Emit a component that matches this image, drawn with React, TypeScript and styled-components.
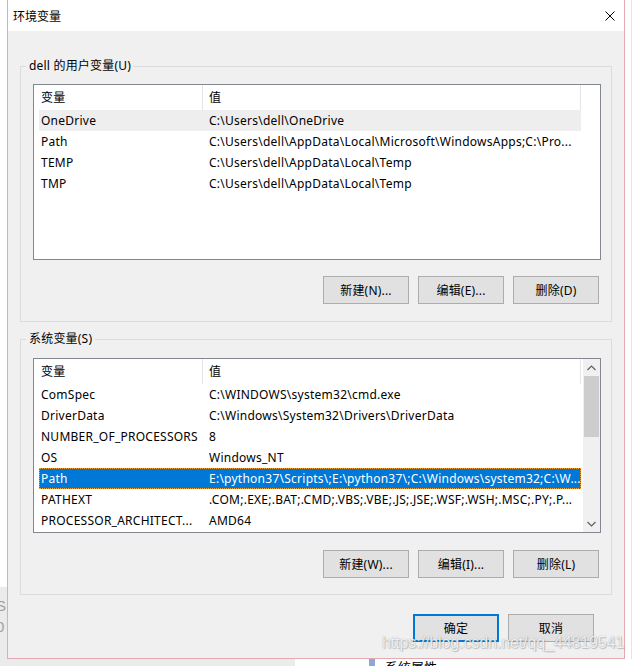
import React from "react";
import styled, { createGlobalStyle } from "styled-components";

const Global = createGlobalStyle`
  html, body { margin: 0; padding: 0; background: #ffffff; }
  body {
    font-family: "Noto Sans", "Noto Sans CJK SC", sans-serif;
    font-size: 12px;
    color: #000;
  }
  * { box-sizing: border-box; }
`;

const Page = styled.div`
  position: relative;
  width: 632px;
  height: 666px;
  overflow: hidden;
  display: grid;
  grid-template-columns: 7px 618px 7px;
  grid-template-rows: 659px 7px;
  background: #ffffff;
`;

const LeftStrip = styled.div`
  display: flex;
  flex-direction: column;
  justify-content: flex-end;
  overflow: hidden;
`;

const LeftGray = styled.div`
  height: 72px;
  background: #ebebeb;
  color: #a0a0a0;
  font-family: "Liberation Sans", sans-serif;
  font-size: 15px;
  line-height: 21px;
  padding-top: 8px;
  margin-left: -4px;
`;

const RightStrip = styled.div`
  border-right: 1px solid #e4e4e4;
`;

const BottomStrip = styled.div`
  grid-column: 1 / 4;
  display: flex;
  align-items: flex-start;
  overflow: hidden;
`;

const BottomGray = styled.div`
  width: 295px;
  height: 7px;
  background: #ebebeb;
`;

const BlueMark = styled.div`
  width: 6px;
  height: 7px;
  margin-left: 74px;
  background: #8ea6d8;
`;

const BottomText = styled.div`
  margin-left: 10px;
  margin-top: 1px;
  font-family: "Noto Sans CJK SC", sans-serif;
  font-size: 13px;
  line-height: 14px;
`;

const Window = styled.div`
  border: 1px solid #e3aab2;
  border-top: none;
  display: flex;
  flex-direction: column;
  background: #f0f0f0;
`;

const TitleBar = styled.div`
  height: 31px;
  background: #ffffff;
  display: flex;
  align-items: center;
  justify-content: space-between;
  padding-left: 5px;
  padding-right: 9px;
  font-family: "Noto Sans CJK SC", sans-serif;
  font-size: 12px;
`;

const CloseIcon = styled.svg`
  width: 10px;
  height: 10px;
  display: block;
`;

const Body = styled.div`
  flex: 1;
  padding: 35px 12px 0 12px;
  display: flex;
  flex-direction: column;
`;

const Group = styled.div<{ $top: number; $pt: number; $pb: number }>`
  position: relative;
  margin-top: ${(p) => p.$top}px;
  border: 1px solid #dcdcdc;
  padding: ${(p) => p.$pt}px 10px ${(p) => p.$pb}px 12px;
  display: flex;
  flex-direction: column;
`;

const GroupLabel = styled.span`
  position: absolute;
  top: -9px;
  left: 5px;
  padding: 0 3px;
  background: #f0f0f0;
  line-height: 16px;
  font-size: 12px;
  letter-spacing: 0.2px;
  white-space: nowrap;
`;

const ListBox = styled.div<{ $h: number }>`
  height: ${(p) => p.$h}px;
  border: 1px solid #828790;
  background: #ffffff;
  display: flex;
`;

const ListContent = styled.div`
  flex: 1;
  padding-left: 5px;
  overflow: hidden;
  letter-spacing: 0.25px;
`;

const HeaderRow = styled.div`
  display: flex;
  height: 25px;
  width: 542px;
`;

const HeaderCell = styled.div<{ $w: number; $pl: number }>`
  width: ${(p) => p.$w}px;
  padding-left: ${(p) => p.$pl}px;
  line-height: 25px;
  border-right: 1px solid #e5e5e5;
  white-space: nowrap;
  overflow: hidden;
`;

const Row = styled.div<{ $state?: "none" | "soft" | "sel" }>`
  display: flex;
  width: 542px;
  height: 21px;
  background: ${(p) =>
    p.$state === "sel" ? "#0078d7" : p.$state === "soft" ? "#eeeeee" : "transparent"};
  color: ${(p) => (p.$state === "sel" ? "#ffffff" : "#000000")};
  outline: ${(p) => (p.$state === "sel" ? "1px dotted #f5a23a" : "none")};
  outline-offset: -1px;
`;

const Cell = styled.div<{ $w: number; $pl: number }>`
  width: ${(p) => p.$w}px;
  padding-left: ${(p) => p.$pl}px;
  line-height: 21px;
  white-space: nowrap;
  overflow: hidden;
`;

const ScrollBar = styled.div`
  width: 17px;
  background: #f0f0f0;
  display: flex;
  flex-direction: column;
`;

const ScrollButton = styled.div`
  height: 17px;
  display: flex;
  align-items: center;
  justify-content: center;
`;

const ScrollTrack = styled.div`
  flex: 1;
  padding: 0 1px;
`;

const Thumb = styled.div`
  height: 61px;
  background: #cdcdcd;
`;

const ButtonRow = styled.div<{ $mt: number; $pr: number }>`
  display: flex;
  justify-content: flex-end;
  gap: 9px;
  margin-top: ${(p) => p.$mt}px;
  padding-right: ${(p) => p.$pr}px;
`;

const Button = styled.button<{ $default?: boolean }>`
  width: 86px;
  height: 28px;
  margin: 0;
  padding: 0;
  background: #e1e1e1;
  border: ${(p) => (p.$default ? "2px solid #0078d7" : "1px solid #adadad")};
  font-family: "Noto Sans", "Noto Sans CJK SC", sans-serif;
  font-size: 12px;
  letter-spacing: 0.2px;
  color: #000;
  text-align: center;
`;

const Watermark = styled.div`
  position: absolute;
  left: 382px;
  top: 634px;
  font-family: "Liberation Sans", sans-serif;
  font-size: 16px;
  letter-spacing: -0.1px;
  color: rgba(255, 255, 255, 0.85);
  text-shadow: 0 0 1px rgba(90, 90, 90, 0.55), 1px 1px 1px rgba(120, 120, 120, 0.35);
  white-space: nowrap;
  pointer-events: none;
`;

type Item = { name: string; value: string; state?: "none" | "soft" | "sel" };

const userVars: Item[] = [
  { name: "OneDrive", value: "C:\\Users\\dell\\OneDrive", state: "soft" },
  { name: "Path", value: "C:\\Users\\dell\\AppData\\Local\\Microsoft\\WindowsApps;C:\\Pro..." },
  { name: "TEMP", value: "C:\\Users\\dell\\AppData\\Local\\Temp" },
  { name: "TMP", value: "C:\\Users\\dell\\AppData\\Local\\Temp" },
];

const sysVars: Item[] = [
  { name: "ComSpec", value: "C:\\WINDOWS\\system32\\cmd.exe" },
  { name: "DriverData", value: "C:\\Windows\\System32\\Drivers\\DriverData" },
  { name: "NUMBER_OF_PROCESSORS", value: "8" },
  { name: "OS", value: "Windows_NT" },
  { name: "Path", value: "E:\\python37\\Scripts\\;E:\\python37\\;C:\\Windows\\system32;C:\\W...", state: "sel" },
  { name: "PATHEXT", value: ".COM;.EXE;.BAT;.CMD;.VBS;.VBE;.JS;.JSE;.WSF;.WSH;.MSC;.PY;.P..." },
  { name: "PROCESSOR_ARCHITECT...", value: "AMD64" },
];

const Chevron = ({ down }: { down?: boolean }) => (
  <svg width="9" height="6" viewBox="0 0 9 6">
    <polyline
      points={down ? "0.5,1 4.5,5 8.5,1" : "0.5,5 4.5,1 8.5,5"}
      fill="none"
      stroke="#606060"
      strokeWidth="1.2"
    />
  </svg>
);

const VarList = ({ items, h, scroll }: { items: Item[]; h: number; scroll?: boolean }) => (
  <ListBox $h={h}>
    <ListContent>
      <HeaderRow>
        <HeaderCell $w={164} $pl={2}>变量</HeaderCell>
        <HeaderCell $w={378} $pl={6}>值</HeaderCell>
      </HeaderRow>
      {items.map((it, i) => (
        <Row key={i} $state={it.state}>
          <Cell $w={164} $pl={2}>{it.name}</Cell>
          <Cell $w={378} $pl={6}>{it.value}</Cell>
        </Row>
      ))}
    </ListContent>
    {scroll && (
      <ScrollBar>
        <ScrollButton>
          <Chevron />
        </ScrollButton>
        <ScrollTrack>
          <Thumb />
        </ScrollTrack>
        <ScrollButton>
          <Chevron down />
        </ScrollButton>
      </ScrollBar>
    )}
  </ListBox>
);

export default function App() {
  return (
    <>
      <Global />
      <Page>
        <LeftStrip>
          <LeftGray>
            S
            <br />0
          </LeftGray>
        </LeftStrip>
        <Window>
          <TitleBar>
            <span>环境变量</span>
            <CloseIcon viewBox="0 0 10 10">
              <line x1="0.5" y1="0.5" x2="9.5" y2="9.5" stroke="#000" strokeWidth="1" />
              <line x1="9.5" y1="0.5" x2="0.5" y2="9.5" stroke="#000" strokeWidth="1" />
            </CloseIcon>
          </TitleBar>
          <Body>
            <Group $top={0} $pt={17} $pb={17}>
              <GroupLabel>dell 的用户变量(U)</GroupLabel>
              <VarList items={userVars} h={176} />
              <ButtonRow $mt={16} $pr={2}>
                <Button>新建(N)...</Button>
                <Button>编辑(E)...</Button>
                <Button>删除(D)</Button>
              </ButtonRow>
            </Group>
            <Group $top={17} $pt={18} $pb={16}>
              <GroupLabel>系统变量(S)</GroupLabel>
              <VarList items={sysVars} h={175} scroll />
              <ButtonRow $mt={17} $pr={2}>
                <Button>新建(W)...</Button>
                <Button>编辑(I)...</Button>
                <Button>删除(L)</Button>
              </ButtonRow>
            </Group>
            <ButtonRow $mt={19} $pr={18}>
              <Button $default>确定</Button>
              <Button>取消</Button>
            </ButtonRow>
          </Body>
        </Window>
        <RightStrip />
        <BottomStrip>
          <BottomGray />
          <BlueMark />
          <BottomText>系统属性</BottomText>
        </BottomStrip>
        <Watermark>https://blog.csdn.net/qq_44819541</Watermark>
      </Page>
    </>
  );
}
